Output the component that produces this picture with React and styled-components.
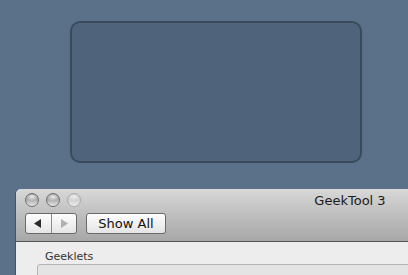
import React from 'react';
import styled, { createGlobalStyle } from 'styled-components';

const GlobalStyle = createGlobalStyle`
  html, body {
    margin: 0;
    padding: 0;
    background: #5b7189;
  }
  body {
    font-family: "DejaVu Sans", "Liberation Sans", sans-serif;
  }
`;

const Desktop = styled.div`
  width: 408px;
  height: 275px;
  overflow: hidden;
  background: #5b7189;
  display: flex;
  flex-direction: column;
  padding-top: 21px;
  box-sizing: border-box;
`;

const DropZone = styled.div`
  margin-left: 70px;
  width: 292px;
  height: 142px;
  box-sizing: border-box;
  border: 2px solid #3a4a5b;
  border-radius: 10px;
  background: #4f647a;
  flex-shrink: 0;
`;

const Window = styled.div`
  margin-top: 26px;
  margin-left: 16px;
  width: 668px;
  flex-shrink: 0;
  border-radius: 5px 5px 0 0;
  overflow: hidden;
  box-shadow: -1px 0 0 #44546a;
  background: #ededed;
`;

const TitleBar = styled.div`
  height: 48px;
  border-bottom: 1px solid #555;
  background: linear-gradient(#d8d8d8, #c8c8c8 30%, #a7a7a7);
  display: flex;
  flex-direction: column;
  padding: 4px 0 0 9px;
  box-sizing: content-box;
  position: relative;
`;

const TopRow = styled.div`
  display: flex;
  align-items: center;
  gap: 7px;
  height: 14px;
`;

const Light = styled.div`
  width: 14px;
  height: 14px;
  border-radius: 50%;
  box-sizing: border-box;
  border: 1px solid ${(p) => (p.dim ? '#a9a9a9' : '#6e6e6e')};
  background: ${(p) =>
    p.dim
      ? 'radial-gradient(ellipse 60% 35% at 50% 22%, rgba(255,255,255,0.7), rgba(255,255,255,0) 100%), linear-gradient(#bdbdbd, #d6d6d6 60%, #ececec)'
      : 'radial-gradient(ellipse 60% 35% at 50% 22%, rgba(255,255,255,0.85), rgba(255,255,255,0) 100%), linear-gradient(#7a7a7a, #a9a9a9 45%, #e6e6e6)'};
`;

const Title = styled.div`
  position: absolute;
  top: 4px;
  left: 0;
  right: 0;
  text-align: center;
  font-size: 13px;
  color: #1a1a1a;
  line-height: 16px;
`;

const Toolbar = styled.div`
  display: flex;
  align-items: center;
  gap: 9px;
  margin-top: 6px;
`;

const Segmented = styled.div`
  display: flex;
  width: 52px;
  height: 21px;
  box-sizing: border-box;
  border: 1px solid #6a6a6a;
  border-radius: 3px;
  background: linear-gradient(#fdfdfd, #f1f1f1 50%, #e4e4e4);
  overflow: hidden;
`;

const Segment = styled.div`
  flex: 1;
  display: flex;
  align-items: center;
  justify-content: center;
  & + & {
    border-left: 1px solid #8a8a8a;
  }
`;

const Button = styled.div`
  width: 80px;
  height: 21px;
  box-sizing: border-box;
  border: 1px solid #6a6a6a;
  border-radius: 3px;
  background: linear-gradient(#fdfdfd, #f1f1f1 50%, #e4e4e4);
  display: flex;
  align-items: center;
  justify-content: center;
  font-size: 13px;
  color: #111;
`;

const Content = styled.div`
  padding: 8px 0 0 21px;
`;

const Label = styled.div`
  font-size: 11px;
  color: #333;
  margin-left: 8px;
  line-height: 13px;
`;

const ListBox = styled.div`
  margin-top: 1px;
  height: 30px;
  border: 1px solid #b4b4b4;
  border-radius: 3px;
  background: #e4e4e4;
`;

const Arrow = ({ dir, color }) => (
  <svg width="8" height="9" viewBox="0 0 8 9">
    {dir === 'left' ? (
      <polygon points="7,0 7,9 0,4.5" fill={color} />
    ) : (
      <polygon points="1,0 1,9 8,4.5" fill={color} />
    )}
  </svg>
);

export default function App() {
  return (
    <>
      <GlobalStyle />
      <Desktop>
        <DropZone />
        <Window>
          <TitleBar>
            <TopRow>
              <Light />
              <Light />
              <Light dim />
            </TopRow>
            <Title>GeekTool 3</Title>
            <Toolbar>
              <Segmented>
                <Segment>
                  <Arrow dir="left" color="#2a2a2a" />
                </Segment>
                <Segment>
                  <Arrow dir="right" color="#b0b0b0" />
                </Segment>
              </Segmented>
              <Button>Show All</Button>
            </Toolbar>
          </TitleBar>
          <Content>
            <Label>Geeklets</Label>
            <ListBox />
          </Content>
        </Window>
      </Desktop>
    </>
  );
}
